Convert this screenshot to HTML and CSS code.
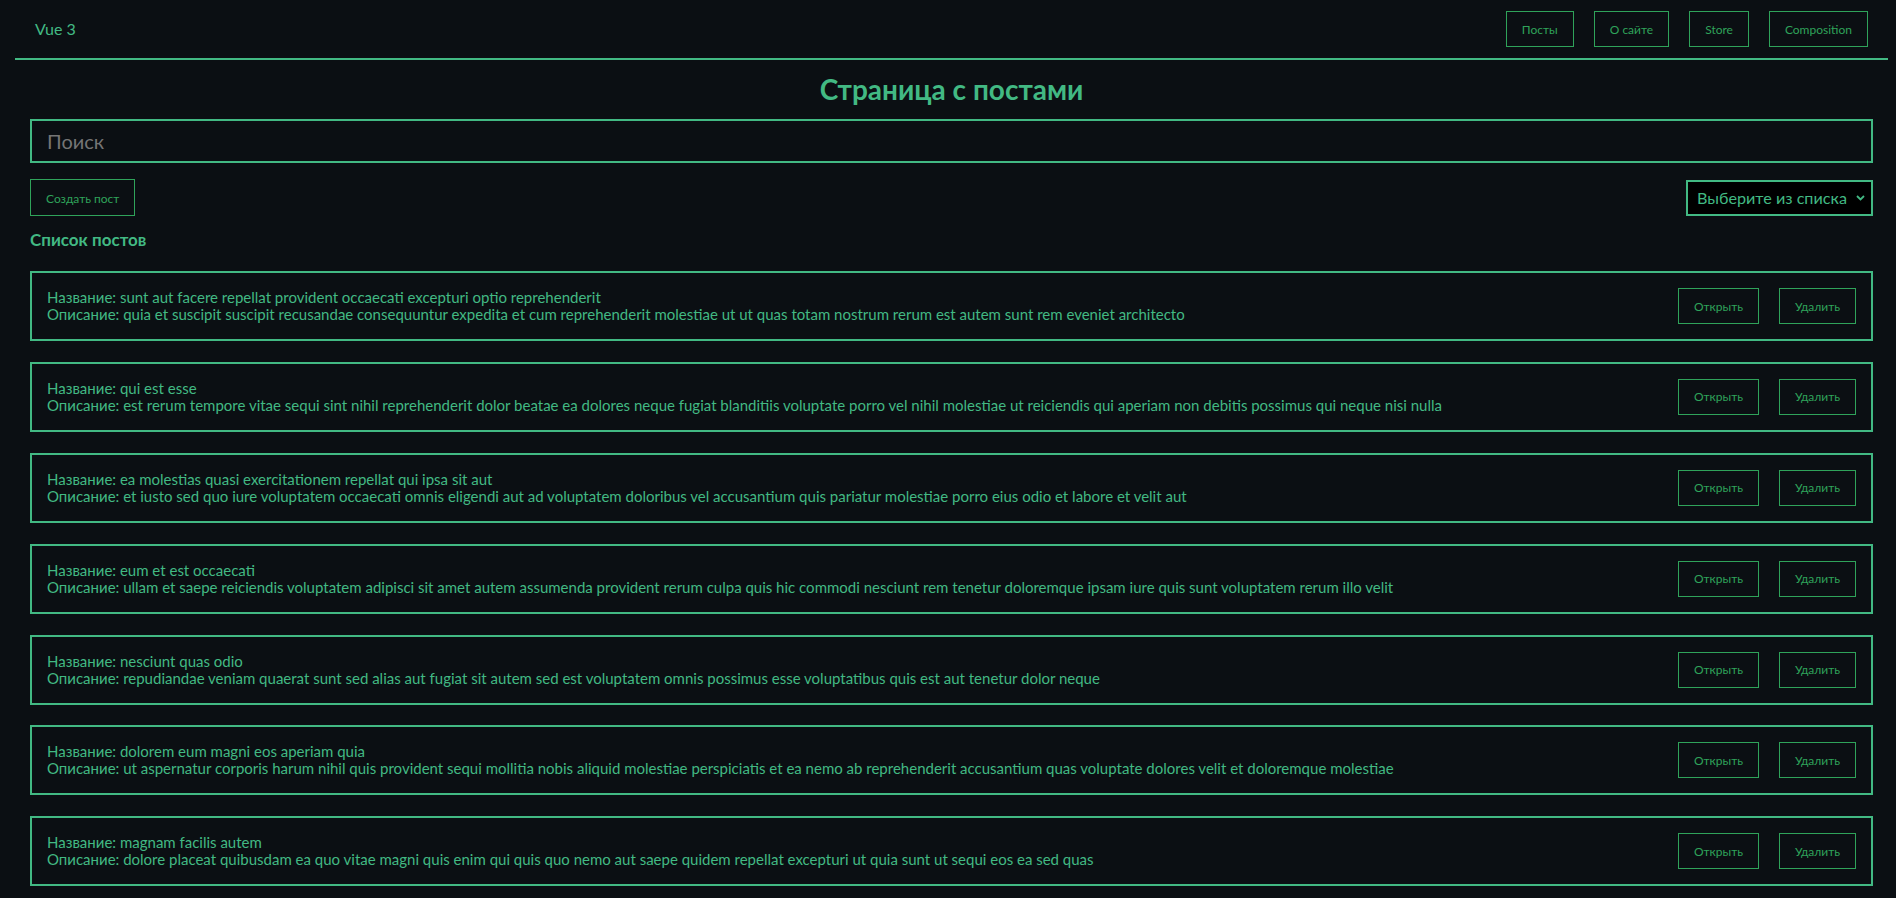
FILE: index.html
```html
<!DOCTYPE html>
<html lang="ru">
<head>
<meta charset="utf-8">
<title>Vue 3</title>
<link rel="stylesheet" href="styles.css">
</head>
<body>
<div class="app">
  <header class="navbar">
    <div class="logo">Vue 3</div>
    <nav class="nav-btns">
      <button class="btn">Посты</button>
      <button class="btn">О сайте</button>
      <button class="btn">Store</button>
      <button class="btn">Composition</button>
    </nav>
  </header>
  <main class="content">
    <h1 class="title">Страница с постами</h1>
    <input class="search" type="text" placeholder="Поиск" autofocus>
    <div class="controls">
      <button class="btn btn-create">Создать пост</button>
      <div class="select-box">
        <select class="select">
          <option value="">Выберите из списка</option>
          <option value="title">По названию</option>
          <option value="body">По описанию</option>
        </select>
        <svg class="chevron" width="9" height="6" viewBox="0 0 9 6"><path d="M1 1l3.5 3.5L8 1" fill="none" stroke="#42b983" stroke-width="1.8"/></svg>
      </div>
    </div>
    <h3 class="list-title">Список постов</h3>
    <div class="posts">
      <div class="post">
        <div class="post-text">
          <div>Название: sunt aut facere repellat provident occaecati excepturi optio reprehenderit</div>
          <div>Описание: quia et suscipit suscipit recusandae consequuntur expedita et cum reprehenderit molestiae ut ut quas totam nostrum rerum est autem sunt rem eveniet architecto</div>
        </div>
        <div class="post-btns"><button class="btn">Открыть</button><button class="btn">Удалить</button></div>
      </div>
      <div class="post">
        <div class="post-text">
          <div>Название: qui est esse</div>
          <div>Описание: est rerum tempore vitae sequi sint nihil reprehenderit dolor beatae ea dolores neque fugiat blanditiis voluptate porro vel nihil molestiae ut reiciendis qui aperiam non debitis possimus qui neque nisi nulla</div>
        </div>
        <div class="post-btns"><button class="btn">Открыть</button><button class="btn">Удалить</button></div>
      </div>
      <div class="post">
        <div class="post-text">
          <div>Название: ea molestias quasi exercitationem repellat qui ipsa sit aut</div>
          <div>Описание: et iusto sed quo iure voluptatem occaecati omnis eligendi aut ad voluptatem doloribus vel accusantium quis pariatur molestiae porro eius odio et labore et velit aut</div>
        </div>
        <div class="post-btns"><button class="btn">Открыть</button><button class="btn">Удалить</button></div>
      </div>
      <div class="post">
        <div class="post-text">
          <div>Название: eum et est occaecati</div>
          <div>Описание: ullam et saepe reiciendis voluptatem adipisci sit amet autem assumenda provident rerum culpa quis hic commodi nesciunt rem tenetur doloremque ipsam iure quis sunt voluptatem rerum illo velit</div>
        </div>
        <div class="post-btns"><button class="btn">Открыть</button><button class="btn">Удалить</button></div>
      </div>
      <div class="post">
        <div class="post-text">
          <div>Название: nesciunt quas odio</div>
          <div>Описание: repudiandae veniam quaerat sunt sed alias aut fugiat sit autem sed est voluptatem omnis possimus esse voluptatibus quis est aut tenetur dolor neque</div>
        </div>
        <div class="post-btns"><button class="btn">Открыть</button><button class="btn">Удалить</button></div>
      </div>
      <div class="post">
        <div class="post-text">
          <div>Название: dolorem eum magni eos aperiam quia</div>
          <div>Описание: ut aspernatur corporis harum nihil quis provident sequi mollitia nobis aliquid molestiae perspiciatis et ea nemo ab reprehenderit accusantium quas voluptate dolores velit et doloremque molestiae</div>
        </div>
        <div class="post-btns"><button class="btn">Открыть</button><button class="btn">Удалить</button></div>
      </div>
      <div class="post">
        <div class="post-text">
          <div>Название: magnam facilis autem</div>
          <div>Описание: dolore placeat quibusdam ea quo vitae magni quis enim qui quis quo nemo aut saepe quidem repellat excepturi ut quia sunt ut sequi eos ea sed quas</div>
        </div>
        <div class="post-btns"><button class="btn">Открыть</button><button class="btn">Удалить</button></div>
      </div>
    </div>
  </main>
</div>
</body>
</html>
```

FILE: styles.css
```css
* { box-sizing: border-box; }

html, body {
  margin: 0;
  padding: 0;
  background: #0b0f13;
}

body {
  font-family: Lato, "Noto Sans", sans-serif;
  color: #42b983;
}

.app {
  margin: 0 8px 0 15px;
}

.navbar {
  height: 60px;
  padding: 0 20px;
  display: flex;
  align-items: center;
  justify-content: space-between;
  border-bottom: 2px solid #42b983;
}

.logo {
  font-size: 16px;
  line-height: 16px;
  margin-top: -1px;
  color: #42b983;
}

.nav-btns {
  display: flex;
  gap: 20px;
}

.btn {
  font-family: Lato, "Noto Sans", sans-serif;
  font-size: 12px;
  height: 36px;
  padding: 0 15px;
  background: transparent;
  color: #2fa35a;
  border: 1px solid #2fa35a;
  cursor: pointer;
}

.content {
  padding: 0 15px;
}

.title {
  margin: 12px 0 0;
  font-size: 28px;
  line-height: 34px;
  font-weight: 700;
  text-align: center;
  color: #42b983;
}

.search {
  display: block;
  width: 100%;
  height: 44px;
  margin-top: 13px;
  padding: 0 15px;
  background: transparent;
  border: 2px solid #42b983;
  outline: none;
  font-family: Lato, "Noto Sans", sans-serif;
  font-size: 20px;
  color: #42b983;
}

.search::placeholder {
  color: #757575;
}

.controls {
  margin-top: 16px;
  display: flex;
  justify-content: space-between;
  align-items: center;
}

.btn-create {
  height: 37px;
  padding-top: 1px;
}

.select-box {
  display: flex;
  align-items: center;
  gap: 9px;
  height: 36px;
  padding: 0 6px 0 9px;
  background: #000;
  border: 2px solid #42b983;
}

.select {
  appearance: none;
  -webkit-appearance: none;
  background: transparent;
  border: none;
  outline: none;
  padding: 0;
  font-family: Lato, "Noto Sans", sans-serif;
  font-size: 16.2px;
  color: #42b983;
}

.chevron {
  display: block;
}

.list-title {
  margin: 13px 0 0;
  font-size: 17px;
  line-height: 22px;
  font-weight: 700;
  color: #42b983;
}

.posts {
  margin-top: 20px;
  display: flex;
  flex-direction: column;
  gap: 20.9px;
}

.post {
  display: flex;
  align-items: center;
  justify-content: space-between;
  padding: 15px;
  border: 2px solid #42b983;
}

.post-text {
  font-size: 15px;
  line-height: 17px;
  color: #42b983;
}

.post-btns {
  display: flex;
  gap: 20px;
  flex-shrink: 0;
}
```
